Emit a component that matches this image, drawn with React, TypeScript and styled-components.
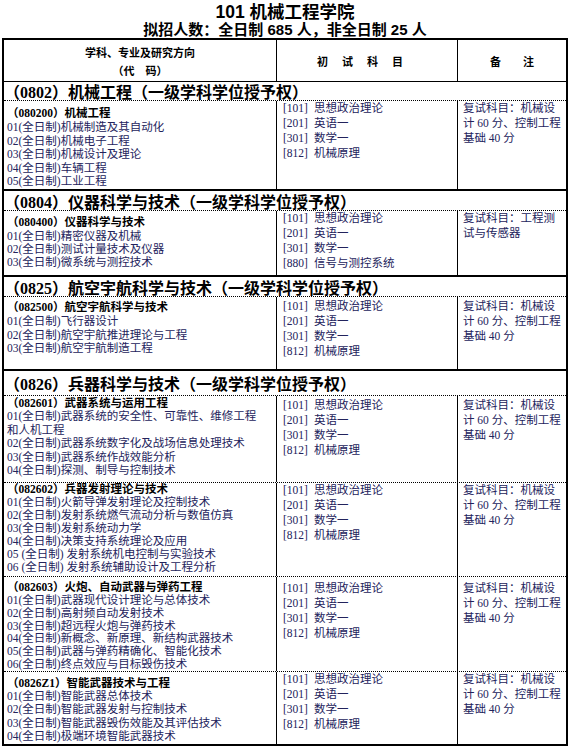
import React from 'react';
import styled, { createGlobalStyle } from 'styled-components';

const GlobalStyles = createGlobalStyle`
  *, *::before, *::after { box-sizing: border-box; }
  html, body { margin: 0; padding: 0; background: #fff; }
  body {
    font-family: "Liberation Serif", "Noto Sans CJK SC", serif;
    color: #000;
  }
`;

const INK = '#23235c';

const Page = styled.div`
  width: 570px;
  padding: 3px 2px 0;
`;

const Heading = styled.header`
  text-align: center;
  font-family: "Liberation Sans", "Noto Sans CJK SC", sans-serif;
  font-weight: 700;
`;

const Title = styled.div`
  font-size: 17.5px;
  line-height: 19px;
`;

const Subtitle = styled.div`
  font-size: 15px;
  line-height: 16px;
`;

const Table = styled.div`
  border: 2px solid #000;
`;

const Grid = styled.div<{ $h: number; $dotted?: boolean }>`
  display: grid;
  grid-template-columns: 273px 181px 1fr;
  height: ${p => p.$h}px;
  border-bottom: ${p => (p.$dotted ? '1px dotted #000' : 'none')};
`;

const HeadRow = styled(Grid)`
  border-bottom: 1px solid #000;
`;

const HeadCell = styled.div<{ $last?: boolean; $spread?: number }>`
  display: flex;
  flex-direction: column;
  align-items: center;
  justify-content: center;
  border-right: ${p => (p.$last ? 'none' : '1px solid #000')};
  font-family: "Noto Sans CJK SC", sans-serif;
  font-weight: 700;
  font-size: 11px;
  line-height: 18px;
  letter-spacing: ${p => p.$spread ?? 0}px;
  white-space: pre;
`;

const SectionBar = styled.div<{ $h: number; $rule: boolean }>`
  height: ${p => p.$h}px;
  display: flex;
  align-items: center;
  padding-left: 0;
  border-top: ${p => (p.$rule ? '2px solid #000' : 'none')};
  border-bottom: 1px dotted #000;
  font-size: 16px;
  font-weight: 700;
  white-space: nowrap;
`;

const Major = styled.div<{ $pad: number }>`
  padding: ${p => p.$pad}px 0 0 3px;
  border-right: 1px solid #000;
  white-space: nowrap;
`;

const MajorName = styled.div<{ $lh: number }>`
  font-size: 11.5px;
  font-weight: 700;
  line-height: ${p => p.$lh}px;
`;

const Direction = styled.div<{ $lh: number }>`
  font-size: 11.5px;
  line-height: ${p => p.$lh}px;
  color: ${INK};
`;

const Exams = styled.div<{ $pt: number }>`
  padding: ${p => p.$pt}px 0 0 6px;
  border-right: 1px solid #000;
  font-size: 11.5px;
  line-height: 15px;
  color: ${INK};
  white-space: nowrap;
`;

const ExamCode = styled.span`
  display: inline-block;
  margin-right: 6px;
`;

const Notes = styled.div<{ $pt: number }>`
  padding: ${p => p.$pt}px 0 0 5px;
  font-size: 11.5px;
  line-height: 15px;
  color: ${INK};
  white-space: pre;
`;

type Row = {
  code: string;
  name: string;
  items: string[];
  exams?: [string, string][];
  notes?: string[];
  h: number;
  pad: number;
  head: number;
  lh: number;
  pt: number;
  dotted?: boolean;
};

type Section = { code: string; name: string; h: number; rule: boolean; rows: Row[] };

const STD_EXAMS: [string, string][] = [
  ['101', '思想政治理论'],
  ['201', '英语一'],
  ['301', '数学一'],
  ['812', '机械原理'],
];

const STD_NOTES = ['复试科目：机械设', '计 60 分、控制工程', '基础 40 分'];

const sections: Section[] = [
  {
    code: '0802', name: '机械工程', h: 19, rule: false,
    rows: [
      {
        code: '080200', name: '机械工程', h: 88, pad: 4, head: 16, lh: 13.5, pt: 0,
        items: [
          '01(全日制)机械制造及其自动化',
          '02(全日制)机械电子工程',
          '03(全日制)机械设计及理论',
          '04(全日制)车辆工程',
          '05(全日制)工业工程',
        ],
      },
    ],
  },
  {
    code: '0804', name: '仪器科学与技术', h: 22, rule: true,
    rows: [
      {
        code: '080400', name: '仪器科学与技术', h: 64, pad: 3, head: 16, lh: 13, pt: 0,
        items: [
          '01(全日制)精密仪器及机械',
          '02(全日制)测试计量技术及仪器',
          '03(全日制)微系统与测控技术',
        ],
        exams: [
          ['101', '思想政治理论'],
          ['201', '英语一'],
          ['301', '数学一'],
          ['880', '信号与测控系统'],
        ],
        notes: ['复试科目：工程测', '试与传感器'],
      },
    ],
  },
  {
    code: '0825', name: '航空宇航科学与技术', h: 22, rule: true,
    rows: [
      {
        code: '082500', name: '航空宇航科学与技术', h: 72, pad: 2, head: 16, lh: 13.5, pt: 2,
        items: [
          '01(全日制)飞行器设计',
          '02(全日制)航空宇航推进理论与工程',
          '03(全日制)航空宇航制造工程',
        ],
      },
    ],
  },
  {
    code: '0826', name: '兵器科学与技术', h: 27, rule: true,
    rows: [
      {
        code: '082601', name: '武器系统与运用工程', h: 87, pad: 0, head: 14, lh: 13.5, pt: 1.5, dotted: true,
        items: [
          '01(全日制)武器系统的安全性、可靠性、维修工程',
          '和人机工程',
          '02(全日制)武器系统数字化及战场信息处理技术',
          '03(全日制)武器系统作战效能分析',
          '04(全日制)探测、制导与控制技术',
        ],
      },
      {
        code: '082602', name: '兵器发射理论与技术', h: 94, pad: 0, head: 13, lh: 12.9, pt: 0, dotted: true,
        items: [
          '01(全日制)火箭导弹发射理论及控制技术',
          '02(全日制)发射系统燃气流动分析与数值仿真',
          '03(全日制)发射系统动力学',
          '04(全日制)决策支持系统理论及应用',
          '05 (全日制) 发射系统机电控制与实验技术',
          '06 (全日制) 发射系统辅助设计及工程分析',
        ],
      },
      {
        code: '082603', name: '火炮、自动武器与弹药工程', h: 95, pad: 4, head: 13, lh: 12.8, pt: 3.5, dotted: true,
        items: [
          '01(全日制)武器现代设计理论与总体技术',
          '02(全日制)高射频自动发射技术',
          '03(全日制)超远程火炮与弹药技术',
          '04(全日制)新概念、新原理、新结构武器技术',
          '05(全日制)武器与弹药精确化、智能化技术',
          '06(全日制)终点效应与目标毁伤技术',
        ],
      },
      {
        code: '0826Z1', name: '智能武器技术与工程', h: 72, pad: 4, head: 14, lh: 13.3, pt: 0,
        items: [
          '01(全日制)智能武器总体技术',
          '02(全日制)智能武器发射与控制技术',
          '03(全日制)智能武器毁伤效能及其评估技术',
          '04(全日制)极端环境智能武器技术',
        ],
      },
    ],
  },
];

function ProgramRow({ row }: { row: Row }) {
  const exams = row.exams ?? STD_EXAMS;
  const notes = row.notes ?? STD_NOTES;
  return (
    <Grid $h={row.h} $dotted={row.dotted}>
      <Major $pad={row.pad}>
        <MajorName $lh={row.head}>（{row.code}）{row.name}</MajorName>
        {row.items.map(item => (
          <Direction key={item} $lh={row.lh}>{item}</Direction>
        ))}
      </Major>
      <Exams $pt={row.pt}>
        {exams.map(([code, subject]) => (
          <div key={code}>
            <ExamCode>[{code}]</ExamCode>
            {subject}
          </div>
        ))}
      </Exams>
      <Notes $pt={row.pt}>
        {notes.map(line => (
          <div key={line}>{line}</div>
        ))}
      </Notes>
    </Grid>
  );
}

export default function App() {
  return (
    <Page>
      <GlobalStyles />
      <Heading>
        <Title>101 机械工程学院</Title>
        <Subtitle>拟招人数：全日制 685 人，非全日制 25 人</Subtitle>
      </Heading>
      <Table>
        <HeadRow $h={42}>
          <HeadCell>
            <div>学科、专业及研究方向</div>
            <div>{'（代\u3000码）'}</div>
          </HeadCell>
          <HeadCell $spread={14}>初试科目</HeadCell>
          <HeadCell $last>{'备\u3000\u3000注'}</HeadCell>
        </HeadRow>
        {sections.map(section => (
          <React.Fragment key={section.code}>
            <SectionBar $h={section.h} $rule={section.rule}>
              （{section.code}）{section.name}（一级学科学位授予权）
            </SectionBar>
            {section.rows.map(row => (
              <ProgramRow key={row.code} row={row} />
            ))}
          </React.Fragment>
        ))}
      </Table>
    </Page>
  );
}
